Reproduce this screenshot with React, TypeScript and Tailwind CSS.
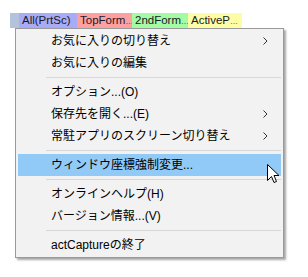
import React from 'react';

type Entry = { label: string; sub?: boolean; active?: boolean } | 'sep';

const entries: Entry[] = [
  { label: 'お気に入りの切り替え', sub: true },
  { label: 'お気に入りの編集' },
  'sep',
  { label: 'オプション...(O)' },
  { label: '保存先を開く...(E)', sub: true },
  { label: '常駐アプリのスクリーン切り替え', sub: true },
  'sep',
  { label: 'ウィンドウ座標強制変更...', active: true },
  'sep',
  { label: 'オンラインヘルプ(H)' },
  { label: 'バージョン情報...(V)' },
  'sep',
  { label: 'actCaptureの終了' }
];

const tabs = [
  { text: 'All(PrtSc)', more: false, cls: 'w-[58px] bg-[#a8abf6]' },
  { text: 'TopForm', more: true, cls: 'w-[55px] bg-[#fda0a0]' },
  { text: '2ndForm', more: true, cls: 'w-[56px] bg-[#a3fba3]' },
  { text: 'ActiveP', more: true, cls: 'w-[54px] bg-[#fdfda6]' }
];

const Chevron = () => (
  <svg width="5" height="8" viewBox="0 0 5 8" className="absolute right-[13px] top-[7px]">
    <path d="M0.5 0.5 L4 4 L0.5 7.5" fill="none" stroke="#333" strokeWidth="1" />
  </svg>
);

const Cursor = () => (
  <svg width="13" height="21" viewBox="0 0 13 21" className="absolute left-[267px] top-[164px]">
    <path
      d="M0.5 0.5 L0.5 16.5 L4.5 12.5 L7 18.5 L9.5 17.5 L7 11.5 L12 11.5 Z"
      fill="#fff"
      stroke="#000"
      strokeWidth="1"
    />
  </svg>
);

export default function App() {
  return (
    <div className="relative w-[308px] h-[277px] bg-white pt-[13px] pl-[10px] font-['Liberation_Sans','Noto_Sans_CJK_JP',sans-serif] text-[12px] text-black">
      {/* capture target tabs */}
      <div className="flex h-[15px] leading-[15px] text-[11.5px]">
        <div className="w-[9px] bg-[#b3c3dc]" />
        {tabs.map((t) => (
          <div key={t.text} className={`${t.cls} pl-[3px] whitespace-nowrap text-[#1a1a2a]`}>
            {t.text}
            {t.more ? <span className="text-[8px] tracking-[-0.5px]">…</span> : null}
          </div>
        ))}
      </div>
      {/* context menu */}
      <div className="ml-[5px] w-[269px] border border-[#9a9a9a] bg-[#f2f2f2] py-[1px] shadow-[2px_2px_2px_rgba(0,0,0,0.35)]">
        {entries.map((e, i) =>
          e === 'sep' ? (
            <div key={i} className="h-[7px] flex items-center pl-[30px] pr-[2px]">
              <div className="h-[1px] w-full bg-[#d7d7d7]" />
            </div>
          ) : (
            <div
              key={i}
              className={`relative h-[22px] leading-[22px] pl-[33px] mx-[2px] whitespace-nowrap ${
                e.active ? 'bg-[#91c9f7]' : ''
              }`}
            >
              {e.label}
              {e.sub ? <Chevron /> : null}
            </div>
          )
        )}
      </div>
      <Cursor />
    </div>
  );
}
